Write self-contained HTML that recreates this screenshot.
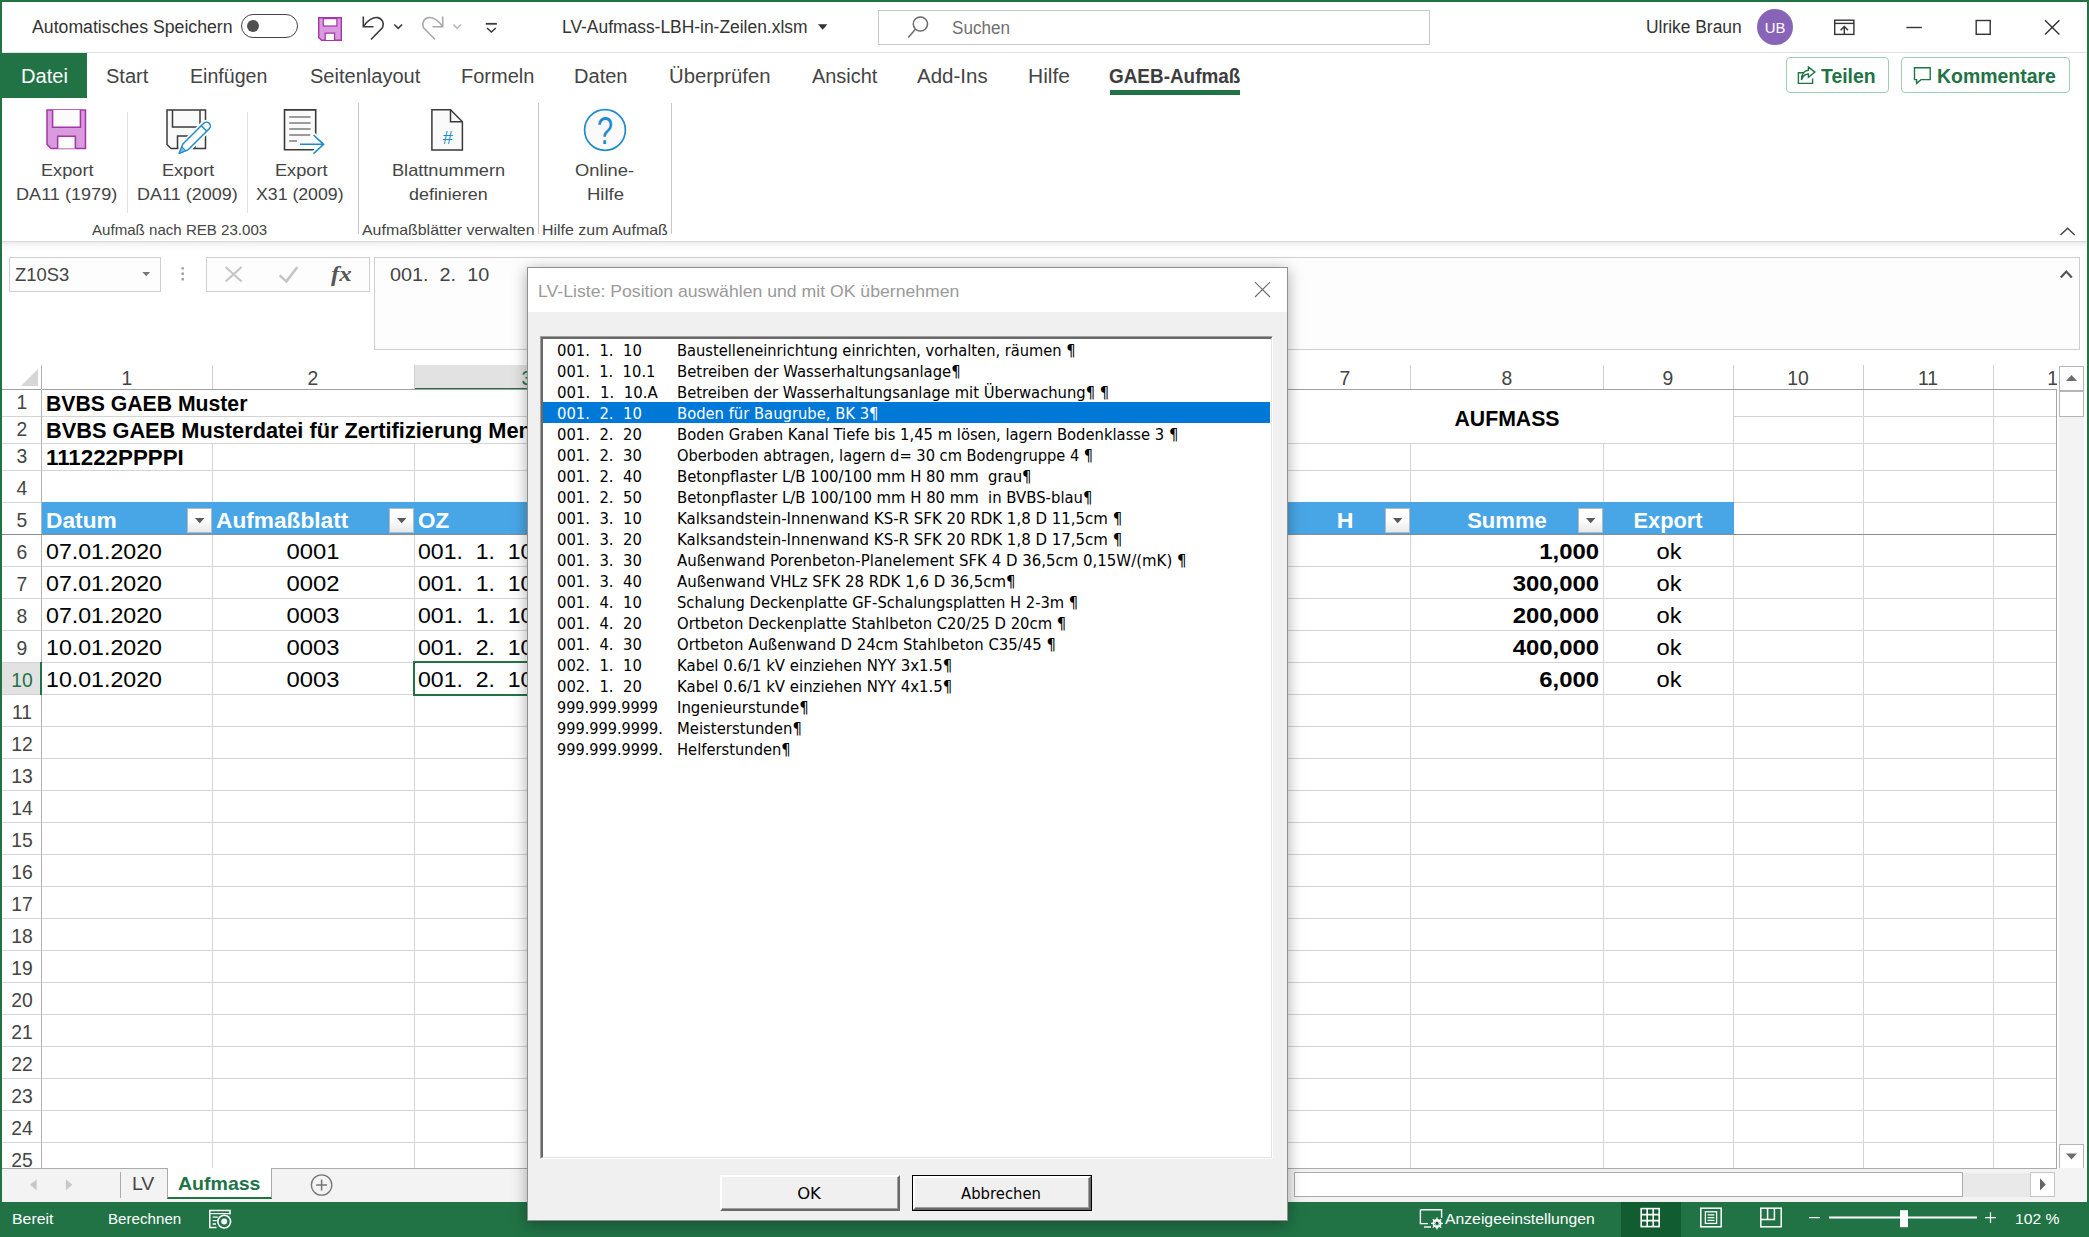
<!DOCTYPE html><html lang="de"><head><meta charset="utf-8"><title>LV-Aufmass-LBH-in-Zeilen.xlsm - Excel</title><style>
*{box-sizing:border-box;margin:0;padding:0}
html,body{width:2089px;height:1237px;overflow:hidden;background:#fff}
body{font-family:"Liberation Sans",sans-serif;position:relative;color:#444}
.t{position:absolute;white-space:pre;display:block}
.a{position:absolute}
svg{position:absolute;overflow:visible}
.vl{position:absolute;width:1px;background:#d4d4d4}
.hl{position:absolute;height:1px;background:#d4d4d4}
</style></head><body>
<div class="a" style="left:0;top:0;width:2089px;height:52px;background:#fff"></div>
<div class="hl" style="left:2px;top:52px;width:2085px;background:#e3e3e3"></div>
<div class="a" style="left:878px;top:10px;width:552px;height:35px;border:1px solid #c8c8c8;background:#fff"></div>
<span class="t" id="t1" style="top:8.76px;font-size:18px;line-height:36px;height:36px;color:#333;left:32.22px;transform-origin:0 50%;transform:scaleX(0.9826);"><span>Automatisches Speichern</span></span>
<div class="a" style="left:241px;top:14px;width:57px;height:24px;border:1.5px solid #444;border-radius:12px;background:#fff"></div>
<div class="a" style="left:247.3px;top:20.2px;width:12px;height:12px;border-radius:6px;background:#505050"></div>
<svg style="left:318px;top:17px" width="24" height="24" viewBox="0 0 24 24"><path d="M0.7 0.7H23.3V23.3H3.6L0.7 20.4Z" fill="#d99ade" stroke="#a436a8" stroke-width="1.4"/><rect x="5.3" y="1.6" width="13.6" height="7.4" fill="#fbfbfb" stroke="#a436a8" stroke-width="1.2"/><path d="M7.2 23V16.2H16.6V23" fill="#fbfbfb" stroke="#a436a8" stroke-width="1.2"/></svg>
<svg style="left:0;top:0" width="2089" height="100" fill="none" stroke-linecap="butt">
<g stroke="#3b3b3b" stroke-width="1.6">
<path d="M363.3 16.5V26.7H373.5"/><path d="M363.6 26.4C367 20.5 373 17 377.5 17.6C382 18.3 384.6 23 382.6 27.5L371 39.5"/>
<path d="M394.3 24.5L398.2 28.4L402.1 24.5"/>
<path d="M485.8 23.8H496.9" stroke-width="1.8"/><path d="M487 28L491.4 32L495.8 28"/>
</g>
<g stroke="#a8a8a8" stroke-width="1.6">
<path d="M442.7 16.5V26.7H432.5"/><path d="M442.4 26.4C439 20.5 433 17 428.5 17.6C424 18.3 421.4 23 423.4 27.5L435 39.5"/>
</g>
<path d="M453.3 24.5L457.2 28.4L461.1 24.5" stroke="#b8b8b8" stroke-width="1.6"/>
<path d="M818 24.2H827.4L822.7 29.8Z" fill="#333" stroke="none"/>
<g stroke="#6a6a6a" stroke-width="1.5"><circle cx="920.4" cy="24" r="7.1"/><path d="M915.4 29.3L908.3 37.6"/></g>
<g stroke="#333" stroke-width="1.4">
<rect x="1834.7" y="20.2" width="19.2" height="14.2"/><path d="M1834.7 23.4H1853.9"/><path d="M1844.3 34V26.6M1840.6 30.2L1844.3 26.4L1848 30.2"/>
<path d="M1906.4 27.5H1921.9"/>
<rect x="1976.2" y="20.5" width="14" height="13.8"/>
<path d="M2045 20.3L2059.4 34.6M2059.4 20.3L2045 34.6"/>
</g>
</svg>
<span class="t" id="t2" style="top:8.76px;font-size:18px;line-height:36px;height:36px;color:#333;left:561.92px;transform-origin:0 50%;transform:scaleX(0.9674);"><span>LV-Aufmass-LBH-in-Zeilen.xlsm</span></span>
<span class="t" id="t3" style="top:10.16px;font-size:18px;line-height:36px;height:36px;color:#707070;left:951.62px;transform-origin:0 50%;transform:scaleX(0.9492);"><span>Suchen</span></span>
<span class="t" id="t4" style="top:8.76px;font-size:18px;line-height:36px;height:36px;color:#333;left:1646.42px;transform-origin:0 50%;transform:scaleX(0.9658);"><span>Ulrike Braun</span></span>
<div class="a" style="left:1757px;top:9px;width:36px;height:36px;border-radius:18px;background:#8764b8"></div>
<span class="t" id="t5" style="top:13.65px;font-size:14px;line-height:28px;height:28px;color:#fff;left:1275.20px;width:1000px;text-align:center;transform-origin:50% 50%;transform:scaleX(1.0631);"><span>UB</span></span>
<div class="a" style="left:2px;top:53px;width:85px;height:45px;background:#217346"></div>
<span class="t" id="t6" style="top:56.54px;font-size:19.5px;line-height:39px;height:39px;color:#fff;left:20.53px;transform-origin:0 50%;transform:scaleX(1.0309);"><span>Datei</span></span>
<span class="t" id="t7" style="top:56.54px;font-size:19.5px;line-height:39px;height:39px;color:#444;left:106.33px;transform-origin:0 50%;transform:scaleX(1.0280);"><span>Start</span></span>
<span class="t" id="t8" style="top:56.54px;font-size:19.5px;line-height:39px;height:39px;color:#444;left:189.63px;transform-origin:0 50%;transform:scaleX(1.0046);"><span>Einfügen</span></span>
<span class="t" id="t9" style="top:56.54px;font-size:19.5px;line-height:39px;height:39px;color:#444;left:309.63px;transform-origin:0 50%;transform:scaleX(1.0281);"><span>Seitenlayout</span></span>
<span class="t" id="t10" style="top:56.54px;font-size:19.5px;line-height:39px;height:39px;color:#444;left:460.53px;transform-origin:0 50%;transform:scaleX(1.0253);"><span>Formeln</span></span>
<span class="t" id="t11" style="top:56.54px;font-size:19.5px;line-height:39px;height:39px;color:#444;left:574.33px;transform-origin:0 50%;transform:scaleX(1.0287);"><span>Daten</span></span>
<span class="t" id="t12" style="top:56.54px;font-size:19.5px;line-height:39px;height:39px;color:#444;left:668.53px;transform-origin:0 50%;transform:scaleX(1.0397);"><span>Überprüfen</span></span>
<span class="t" id="t13" style="top:56.54px;font-size:19.5px;line-height:39px;height:39px;color:#444;left:811.53px;transform-origin:0 50%;transform:scaleX(1.0217);"><span>Ansicht</span></span>
<span class="t" id="t14" style="top:56.54px;font-size:19.5px;line-height:39px;height:39px;color:#444;left:917.33px;transform-origin:0 50%;transform:scaleX(1.0511);"><span>Add-Ins</span></span>
<span class="t" id="t15" style="top:56.54px;font-size:19.5px;line-height:39px;height:39px;color:#444;left:1028.13px;transform-origin:0 50%;transform:scaleX(1.0775);"><span>Hilfe</span></span>
<span class="t" id="t16" style="top:56.54px;font-size:19.5px;line-height:39px;height:39px;color:#3d3d3d;font-weight:700;left:1108.83px;transform-origin:0 50%;transform:scaleX(0.9699);"><span>GAEB-Aufmaß</span></span>
<div class="a" style="left:1110px;top:90px;width:130px;height:5px;background:#217346"></div>
<div class="a" style="left:1786px;top:57px;width:103px;height:36px;border:1px solid #9bceb0;border-radius:4px;background:#fff"></div>
<div class="a" style="left:1901px;top:57px;width:168.5px;height:36px;border:1px solid #9bceb0;border-radius:4px;background:#fff"></div>
<svg style="left:0;top:0" width="2089" height="100" fill="none" stroke="#217346" stroke-width="1.4" stroke-linejoin="miter">
<path d="M1804 72.8H1798.4V83.4H1812.6V78.6"/>
<path d="M1808.4 70.2V66.9L1814.9 72.1L1808.4 77.3V74C1805 74 1802.8 76 1801.5 80C1801.5 74 1804 70.6 1808.4 70.2Z"/>
<path d="M1914.5 67.7H1930.2V79.6H1921L1916.6 83.4V79.6H1914.5Z"/>
</svg>
<span class="t" id="t17" style="top:56.74px;font-size:19.5px;line-height:39px;height:39px;color:#217346;font-weight:700;left:1820.83px;transform-origin:0 50%;transform:scaleX(0.9952);"><span>Teilen</span></span>
<span class="t" id="t18" style="top:56.74px;font-size:19.5px;line-height:39px;height:39px;color:#217346;font-weight:700;left:1936.53px;transform-origin:0 50%;transform:scaleX(0.9978);"><span>Kommentare</span></span>
<div class="a" style="left:2px;top:98px;width:2085px;height:143px;background:#fff"></div>
<svg style="left:46px;top:109px" width="40.5" height="40.5" viewBox="0 0 40 40"><path d="M1 1H39V39H5L1 35Z" fill="#d99ade" stroke="#a436a8" stroke-width="1.5"/><path d="M6.5 1V18H34V1" fill="#fbfbfb" stroke="#a436a8" stroke-width="1.5"/><path d="M11.5 39V27H29V39" fill="#fbfbfb" stroke="#a436a8" stroke-width="1.5"/></svg>
<svg style="left:166px;top:109px" width="46" height="46" viewBox="0 0 46 46" fill="none">
<path d="M1 1H39.5V39.5H5L1 35.5Z" fill="#fafafa" stroke="#3a3a3a" stroke-width="1.5"/>
<path d="M6.5 1V18H34V1" stroke="#3a3a3a" stroke-width="1.5"/><path d="M11.5 39.5V27H29V39.5" stroke="#3a3a3a" stroke-width="1.5"/>
<g transform="translate(13.3 44.2) rotate(-45)">
<path d="M0 0L9 -3.9H38.4A3.9 3.9 0 0 1 38.4 3.9H9Z" fill="#fff" stroke="#fff" stroke-width="5"/>
<path d="M0 0L9 -3.9H38.4A3.9 3.9 0 0 1 38.4 3.9H9Z" fill="#fff" stroke="#1e8bcd" stroke-width="1.5" stroke-linejoin="round"/>
<path d="M0 0L6.4 -2.9V2.9Z" fill="#7fbde6" stroke="#1e8bcd" stroke-width="1"/>
<path d="M35 -3.9V3.9" stroke="#1e8bcd" stroke-width="1.5"/>
</g></svg>
<svg style="left:283px;top:109px" width="42" height="46" viewBox="0 0 42 46" fill="none">
<path d="M1.5 0.9H32.7V40.7H1.5Z" fill="#fafafa" stroke="#3a3a3a" stroke-width="1.6"/>
<path d="M6.2 8H27.6M6.2 14H27.6M6.2 20.1H27.6M6.2 26H27.6M6.2 32.1H14" stroke="#7c7c7c" stroke-width="1.5"/>
<path d="M30.5 26L40.6 35.3L30.5 44.6" stroke="#fff" stroke-width="5" stroke-linecap="square"/>
<path d="M31.5 24.5L43 35.3L31.5 46Z" fill="#fff"/><path d="M28 35.3H33" stroke="#fafafa" stroke-width="4"/>
<path d="M17 35.3H40.2M30.5 26L40.6 35.3L30.5 44.6" stroke="#1e8bcd" stroke-width="1.6"/>
</svg>
<svg style="left:431px;top:109px" width="33" height="42" viewBox="0 0 33 42" fill="none">
<path d="M0.9 0.8H19.5L31.4 12.8V41H0.9Z" fill="#fafafa" stroke="#3a3a3a" stroke-width="1.5"/>
<path d="M19.5 0.8V12.8H31.4" stroke="#3a3a3a" stroke-width="1.5"/>
<text x="16.8" y="35.2" font-family="Liberation Sans, sans-serif" font-size="18" fill="#1e8bcd" text-anchor="middle" stroke="none">#</text>
</svg>
<svg style="left:583px;top:108px" width="44" height="44" viewBox="0 0 44 44" fill="none">
<circle cx="22" cy="22" r="20.4" fill="#fafafa" stroke="#1e8bcd" stroke-width="1.7"/>
<text x="22" y="36" font-family="Liberation Sans, sans-serif" font-size="39" fill="#1e8bcd" text-anchor="middle" stroke="none" transform="translate(22 0) scale(0.74 1) translate(-22 0)">?</text>
</svg>
<span class="t" id="t19" style="top:153.61px;font-size:17px;line-height:34px;height:34px;color:#444;left:41.48px;transform-origin:0 50%;transform:scaleX(1.0692);"><span>Export</span></span>
<span class="t" id="t20" style="top:177.81px;font-size:17px;line-height:34px;height:34px;color:#444;left:16.48px;transform-origin:0 50%;transform:scaleX(1.0641);"><span>DA11 (1979)</span></span>
<span class="t" id="t21" style="top:153.61px;font-size:17px;line-height:34px;height:34px;color:#444;left:161.78px;transform-origin:0 50%;transform:scaleX(1.0631);"><span>Export</span></span>
<span class="t" id="t22" style="top:177.81px;font-size:17px;line-height:34px;height:34px;color:#444;left:136.98px;transform-origin:0 50%;transform:scaleX(1.0589);"><span>DA11 (2009)</span></span>
<span class="t" id="t23" style="top:153.61px;font-size:17px;line-height:34px;height:34px;color:#444;left:274.78px;transform-origin:0 50%;transform:scaleX(1.0692);"><span>Export</span></span>
<span class="t" id="t24" style="top:177.81px;font-size:17px;line-height:34px;height:34px;color:#444;left:256.48px;transform-origin:0 50%;transform:scaleX(1.0406);"><span>X31 (2009)</span></span>
<span class="t" id="t25" style="top:153.61px;font-size:17px;line-height:34px;height:34px;color:#444;left:391.68px;transform-origin:0 50%;transform:scaleX(1.0691);"><span>Blattnummern</span></span>
<span class="t" id="t26" style="top:177.81px;font-size:17px;line-height:34px;height:34px;color:#444;left:408.68px;transform-origin:0 50%;transform:scaleX(1.0531);"><span>definieren</span></span>
<span class="t" id="t27" style="top:153.61px;font-size:17px;line-height:34px;height:34px;color:#444;left:574.98px;transform-origin:0 50%;transform:scaleX(1.0771);"><span>Online-</span></span>
<span class="t" id="t28" style="top:177.81px;font-size:17px;line-height:34px;height:34px;color:#444;left:586.98px;transform-origin:0 50%;transform:scaleX(1.0889);"><span>Hilfe</span></span>
<span class="t" id="t29" style="top:214.60px;font-size:15px;line-height:30px;height:30px;color:#444;left:91.70px;transform-origin:0 50%;transform:scaleX(1.0054);"><span>Aufmaß nach REB 23.003</span></span>
<span class="t" id="t30" style="top:214.60px;font-size:15px;line-height:30px;height:30px;color:#444;left:361.70px;transform-origin:0 50%;transform:scaleX(1.0616);"><span>Aufmaßblätter verwalten</span></span>
<span class="t" id="t31" style="top:214.60px;font-size:15px;line-height:30px;height:30px;color:#444;left:541.70px;transform-origin:0 50%;transform:scaleX(1.0627);"><span>Hilfe zum Aufmaß</span></span>
<div class="vl" style="left:127px;top:112px;height:101px;background:#e1e1e1"></div>
<div class="vl" style="left:247px;top:112px;height:101px;background:#e1e1e1"></div>
<div class="vl" style="left:358px;top:103px;height:131px;background:#c8c8c8"></div>
<div class="vl" style="left:538px;top:103px;height:131px;background:#c8c8c8"></div>
<div class="vl" style="left:671px;top:103px;height:131px;background:#c8c8c8"></div>
<svg style="left:0;top:0" width="2089" height="240" fill="none"><path d="M2060.5 235L2067.6 228.3L2074.7 235" stroke="#444" stroke-width="1.5"/></svg>
<div class="a" style="left:2px;top:241px;width:2085px;height:10px;background:linear-gradient(#d9d9d9 0,#d9d9d9 1px,#ececec 1px,#fafafa 6px,#fff 10px)"></div>
<div class="a" style="left:9px;top:257px;width:152px;height:35px;border:1px solid #cfcfcf;background:#fdfdfd"></div>
<div class="a" style="left:206px;top:257px;width:164px;height:35px;border:1px solid #cfcfcf;background:#fdfdfd"></div>
<div class="a" style="left:374px;top:257px;width:1706px;height:93px;border:1px solid #cfcfcf;background:#fdfdfd"></div>
<span class="t" id="t32" style="top:256.02px;font-size:19px;line-height:38px;height:38px;color:#444;left:14.86px;transform-origin:0 50%;transform:scaleX(0.9696);"><span>Z10S3</span></span>
<span class="t" id="t33" style="top:256.22px;font-size:19px;line-height:38px;height:38px;color:#444;left:390.26px;transform-origin:0 50%;transform:scaleX(1.0431);"><span>001.  2.  10</span></span>
<svg style="left:0;top:240px" width="2089" height="120" fill="none">
<path d="M142.3 32H150.1L146.2 36.2Z" fill="#777"/>
<path d="M181.5 27.2h2.4v2.4h-2.4zM181.5 32.6h2.4v2.4h-2.4zM181.5 38h2.4v2.4h-2.4z" fill="#9d9d9d"/>
<path d="M225.6 27L241.6 41.6M241.6 27L225.6 41.6" stroke="#c4c4c4" stroke-width="2"/>
<path d="M279.6 35.4L286.4 41.4L297.4 27" stroke="#c4c4c4" stroke-width="2.6"/>
<path d="M2060.8 37.6L2066.3 31.6L2071.8 37.6" stroke="#555" stroke-width="2.2"/>
</svg>
<span class="t" id="t34" style="top:251.88px;font-size:22px;line-height:44px;height:44px;color:#555;font-weight:700;font-family:'Liberation Serif', serif;left:330.68px;transform-origin:0 50%;transform:scaleX(1.1261);font-style:italic;"><span>fx</span></span>
<div class="a" style="left:2px;top:351px;width:2055px;height:817px;background:#fff;overflow:hidden">
<div class="a" style="left:412px;top:14px;width:220px;height:24px;background:#e2e2e2"></div>
<div class="a" style="left:412px;top:37px;width:220px;height:2px;background:#217346"></div>
<div class="a" style="left:0px;top:312px;width:39px;height:31px;background:#e2e2e2"></div>
<div class="hl" style="left:0px;top:65px;width:1278px;background:#d4d4d4"></div>
<div class="hl" style="left:1731px;top:65px;width:323px;background:#d4d4d4"></div>
<div class="hl" style="left:0px;top:92px;width:2054px;background:#d4d4d4"></div>
<div class="hl" style="left:0px;top:119px;width:2054px;background:#d4d4d4"></div>
<div class="hl" style="left:0px;top:151px;width:2054px;background:#d4d4d4"></div>
<div class="hl" style="left:0px;top:183px;width:2054px;background:#d4d4d4"></div>
<div class="hl" style="left:0px;top:215px;width:2054px;background:#d4d4d4"></div>
<div class="hl" style="left:0px;top:247px;width:2054px;background:#d4d4d4"></div>
<div class="hl" style="left:0px;top:279px;width:2054px;background:#d4d4d4"></div>
<div class="hl" style="left:0px;top:311px;width:2054px;background:#d4d4d4"></div>
<div class="hl" style="left:0px;top:343px;width:2054px;background:#d4d4d4"></div>
<div class="hl" style="left:0px;top:375px;width:2054px;background:#d4d4d4"></div>
<div class="hl" style="left:0px;top:407px;width:2054px;background:#d4d4d4"></div>
<div class="hl" style="left:0px;top:439px;width:2054px;background:#d4d4d4"></div>
<div class="hl" style="left:0px;top:471px;width:2054px;background:#d4d4d4"></div>
<div class="hl" style="left:0px;top:503px;width:2054px;background:#d4d4d4"></div>
<div class="hl" style="left:0px;top:535px;width:2054px;background:#d4d4d4"></div>
<div class="hl" style="left:0px;top:567px;width:2054px;background:#d4d4d4"></div>
<div class="hl" style="left:0px;top:599px;width:2054px;background:#d4d4d4"></div>
<div class="hl" style="left:0px;top:631px;width:2054px;background:#d4d4d4"></div>
<div class="hl" style="left:0px;top:663px;width:2054px;background:#d4d4d4"></div>
<div class="hl" style="left:0px;top:695px;width:2054px;background:#d4d4d4"></div>
<div class="hl" style="left:0px;top:727px;width:2054px;background:#d4d4d4"></div>
<div class="hl" style="left:0px;top:759px;width:2054px;background:#d4d4d4"></div>
<div class="hl" style="left:0px;top:791px;width:2054px;background:#d4d4d4"></div>
<div class="vl" style="left:210px;top:92px;height:725px;background:#d4d4d4"></div>
<div class="vl" style="left:412px;top:92px;height:725px;background:#d4d4d4"></div>
<div class="vl" style="left:632px;top:92px;height:725px;background:#d4d4d4"></div>
<div class="vl" style="left:848px;top:92px;height:725px;background:#d4d4d4"></div>
<div class="vl" style="left:1063px;top:92px;height:725px;background:#d4d4d4"></div>
<div class="vl" style="left:1278px;top:92px;height:725px;background:#d4d4d4"></div>
<div class="vl" style="left:1408px;top:92px;height:725px;background:#d4d4d4"></div>
<div class="vl" style="left:1601px;top:92px;height:725px;background:#d4d4d4"></div>
<div class="vl" style="left:1731px;top:38px;height:779px;background:#d4d4d4"></div>
<div class="vl" style="left:1861px;top:38px;height:779px;background:#d4d4d4"></div>
<div class="vl" style="left:1991px;top:38px;height:779px;background:#d4d4d4"></div>
<div class="vl" style="left:210px;top:14px;height:24px;background:#d0d0d0"></div>
<div class="vl" style="left:412px;top:14px;height:24px;background:#d0d0d0"></div>
<div class="vl" style="left:632px;top:14px;height:24px;background:#d0d0d0"></div>
<div class="vl" style="left:848px;top:14px;height:24px;background:#d0d0d0"></div>
<div class="vl" style="left:1063px;top:14px;height:24px;background:#d0d0d0"></div>
<div class="vl" style="left:1278px;top:14px;height:24px;background:#d0d0d0"></div>
<div class="vl" style="left:1408px;top:14px;height:24px;background:#d0d0d0"></div>
<div class="vl" style="left:1601px;top:14px;height:24px;background:#d0d0d0"></div>
<div class="vl" style="left:1731px;top:14px;height:24px;background:#d0d0d0"></div>
<div class="vl" style="left:1861px;top:14px;height:24px;background:#d0d0d0"></div>
<div class="vl" style="left:1991px;top:14px;height:24px;background:#d0d0d0"></div>
<div class="hl" style="left:0px;top:38px;width:2055px;background:#a0a0a0"></div>
<div class="vl" style="left:39px;top:14px;height:803px;background:#b4b4b4"></div>
<div class="vl" style="left:2054px;top:38px;height:779px;background:#a6a6a6"></div>
<svg style="left:18px;top:17px" width="19" height="19"><path d="M18 1V18H1Z" fill="#d6d6d6"/></svg>
<div class="a" style="left:40px;top:151px;width:1692px;height:32px;background:#49a6e6"></div>
<div class="hl" style="left:0px;top:183px;width:2054px;background:#8c8c8c"></div>
<div class="a" style="left:38px;top:311px;width:2px;height:33px;background:#217346"></div>
<div class="a" style="left:185px;top:157px;width:25px;height:25px;border:1px solid #b9b9b9;background:linear-gradient(#fff,#fff 45%,#e9e9e9)"><svg style="left:7px;top:9px" width="10" height="6"><path d="M0 0H9.4L4.7 5.2Z" fill="#595959"/></svg></div>
<div class="a" style="left:387px;top:157px;width:25px;height:25px;border:1px solid #b9b9b9;background:linear-gradient(#fff,#fff 45%,#e9e9e9)"><svg style="left:7px;top:9px" width="10" height="6"><path d="M0 0H9.4L4.7 5.2Z" fill="#595959"/></svg></div>
<div class="a" style="left:1383px;top:157px;width:25px;height:25px;border:1px solid #b9b9b9;background:linear-gradient(#fff,#fff 45%,#e9e9e9)"><svg style="left:7px;top:9px" width="10" height="6"><path d="M0 0H9.4L4.7 5.2Z" fill="#595959"/></svg></div>
<div class="a" style="left:1576px;top:157px;width:25px;height:25px;border:1px solid #b9b9b9;background:linear-gradient(#fff,#fff 45%,#e9e9e9)"><svg style="left:7px;top:9px" width="10" height="6"><path d="M0 0H9.4L4.7 5.2Z" fill="#595959"/></svg></div>
<div class="a" style="left:411px;top:310px;width:223px;height:35px;border:2px solid #217346"></div>
<span class="t" id="t35" style="top:357.02px;font-size:21px;line-height:42px;height:42px;color:#444;left:-372.70px;width:1000px;text-align:center;transform-origin:50% 50%;transform:scaleX(0.9200);margin-left:-2px;margin-top:-351px;"><span>1</span></span>
<span class="t" id="t36" style="top:357.02px;font-size:21px;line-height:42px;height:42px;color:#444;left:-186.80px;width:1000px;text-align:center;transform-origin:50% 50%;transform:scaleX(0.9200);margin-left:-2px;margin-top:-351px;"><span>2</span></span>
<span class="t" id="t37" style="top:357.02px;font-size:21px;line-height:42px;height:42px;color:#217346;left:27.20px;width:1000px;text-align:center;transform-origin:50% 50%;transform:scaleX(0.9200);margin-left:-2px;margin-top:-351px;"><span>3</span></span>
<span class="t" id="t38" style="top:357.02px;font-size:21px;line-height:42px;height:42px;color:#444;left:242.00px;width:1000px;text-align:center;transform-origin:50% 50%;transform:scaleX(0.9200);margin-left:-2px;margin-top:-351px;"><span>4</span></span>
<span class="t" id="t39" style="top:357.02px;font-size:21px;line-height:42px;height:42px;color:#444;left:457.00px;width:1000px;text-align:center;transform-origin:50% 50%;transform:scaleX(0.9200);margin-left:-2px;margin-top:-351px;"><span>5</span></span>
<span class="t" id="t40" style="top:357.02px;font-size:21px;line-height:42px;height:42px;color:#444;left:672.00px;width:1000px;text-align:center;transform-origin:50% 50%;transform:scaleX(0.9200);margin-left:-2px;margin-top:-351px;"><span>6</span></span>
<span class="t" id="t41" style="top:357.02px;font-size:21px;line-height:42px;height:42px;color:#444;left:845.00px;width:1000px;text-align:center;transform-origin:50% 50%;transform:scaleX(0.9200);margin-left:-2px;margin-top:-351px;"><span>7</span></span>
<span class="t" id="t42" style="top:357.02px;font-size:21px;line-height:42px;height:42px;color:#444;left:1007.00px;width:1000px;text-align:center;transform-origin:50% 50%;transform:scaleX(0.9200);margin-left:-2px;margin-top:-351px;"><span>8</span></span>
<span class="t" id="t43" style="top:357.02px;font-size:21px;line-height:42px;height:42px;color:#444;left:1168.40px;width:1000px;text-align:center;transform-origin:50% 50%;transform:scaleX(0.9200);margin-left:-2px;margin-top:-351px;"><span>9</span></span>
<span class="t" id="t44" style="top:357.02px;font-size:21px;line-height:42px;height:42px;color:#444;left:1298.40px;width:1000px;text-align:center;transform-origin:50% 50%;transform:scaleX(0.9200);margin-left:-2px;margin-top:-351px;"><span>10</span></span>
<span class="t" id="t45" style="top:357.02px;font-size:21px;line-height:42px;height:42px;color:#444;left:1428.40px;width:1000px;text-align:center;transform-origin:50% 50%;transform:scaleX(0.9200);margin-left:-2px;margin-top:-351px;"><span>11</span></span>
<span class="t" id="t46" style="top:357.02px;font-size:21px;line-height:42px;height:42px;color:#444;left:1558.40px;width:1000px;text-align:center;transform-origin:50% 50%;transform:scaleX(0.9200);margin-left:-2px;margin-top:-351px;"><span>12</span></span>
<span class="t" id="t47" style="top:381.22px;font-size:21px;line-height:42px;height:42px;color:#444;left:-477.60px;width:1000px;text-align:center;transform-origin:50% 50%;transform:scaleX(0.9200);margin-left:-2px;margin-top:-351px;"><span>1</span></span>
<span class="t" id="t48" style="top:408.22px;font-size:21px;line-height:42px;height:42px;color:#444;left:-477.60px;width:1000px;text-align:center;transform-origin:50% 50%;transform:scaleX(0.9200);margin-left:-2px;margin-top:-351px;"><span>2</span></span>
<span class="t" id="t49" style="top:435.22px;font-size:21px;line-height:42px;height:42px;color:#444;left:-477.60px;width:1000px;text-align:center;transform-origin:50% 50%;transform:scaleX(0.9200);margin-left:-2px;margin-top:-351px;"><span>3</span></span>
<span class="t" id="t50" style="top:467.22px;font-size:21px;line-height:42px;height:42px;color:#444;left:-477.60px;width:1000px;text-align:center;transform-origin:50% 50%;transform:scaleX(0.9200);margin-left:-2px;margin-top:-351px;"><span>4</span></span>
<span class="t" id="t51" style="top:499.22px;font-size:21px;line-height:42px;height:42px;color:#444;left:-477.60px;width:1000px;text-align:center;transform-origin:50% 50%;transform:scaleX(0.9200);margin-left:-2px;margin-top:-351px;"><span>5</span></span>
<span class="t" id="t52" style="top:531.22px;font-size:21px;line-height:42px;height:42px;color:#444;left:-477.60px;width:1000px;text-align:center;transform-origin:50% 50%;transform:scaleX(0.9200);margin-left:-2px;margin-top:-351px;"><span>6</span></span>
<span class="t" id="t53" style="top:563.22px;font-size:21px;line-height:42px;height:42px;color:#444;left:-477.60px;width:1000px;text-align:center;transform-origin:50% 50%;transform:scaleX(0.9200);margin-left:-2px;margin-top:-351px;"><span>7</span></span>
<span class="t" id="t54" style="top:595.22px;font-size:21px;line-height:42px;height:42px;color:#444;left:-477.60px;width:1000px;text-align:center;transform-origin:50% 50%;transform:scaleX(0.9200);margin-left:-2px;margin-top:-351px;"><span>8</span></span>
<span class="t" id="t55" style="top:627.22px;font-size:21px;line-height:42px;height:42px;color:#444;left:-477.60px;width:1000px;text-align:center;transform-origin:50% 50%;transform:scaleX(0.9200);margin-left:-2px;margin-top:-351px;"><span>9</span></span>
<span class="t" id="t56" style="top:659.22px;font-size:21px;line-height:42px;height:42px;color:#217346;left:-477.60px;width:1000px;text-align:center;transform-origin:50% 50%;transform:scaleX(0.9200);margin-left:-2px;margin-top:-351px;"><span>10</span></span>
<span class="t" id="t57" style="top:691.22px;font-size:21px;line-height:42px;height:42px;color:#444;left:-477.60px;width:1000px;text-align:center;transform-origin:50% 50%;transform:scaleX(0.9200);margin-left:-2px;margin-top:-351px;"><span>11</span></span>
<span class="t" id="t58" style="top:723.22px;font-size:21px;line-height:42px;height:42px;color:#444;left:-477.60px;width:1000px;text-align:center;transform-origin:50% 50%;transform:scaleX(0.9200);margin-left:-2px;margin-top:-351px;"><span>12</span></span>
<span class="t" id="t59" style="top:755.22px;font-size:21px;line-height:42px;height:42px;color:#444;left:-477.60px;width:1000px;text-align:center;transform-origin:50% 50%;transform:scaleX(0.9200);margin-left:-2px;margin-top:-351px;"><span>13</span></span>
<span class="t" id="t60" style="top:787.22px;font-size:21px;line-height:42px;height:42px;color:#444;left:-477.60px;width:1000px;text-align:center;transform-origin:50% 50%;transform:scaleX(0.9200);margin-left:-2px;margin-top:-351px;"><span>14</span></span>
<span class="t" id="t61" style="top:819.22px;font-size:21px;line-height:42px;height:42px;color:#444;left:-477.60px;width:1000px;text-align:center;transform-origin:50% 50%;transform:scaleX(0.9200);margin-left:-2px;margin-top:-351px;"><span>15</span></span>
<span class="t" id="t62" style="top:851.22px;font-size:21px;line-height:42px;height:42px;color:#444;left:-477.60px;width:1000px;text-align:center;transform-origin:50% 50%;transform:scaleX(0.9200);margin-left:-2px;margin-top:-351px;"><span>16</span></span>
<span class="t" id="t63" style="top:883.22px;font-size:21px;line-height:42px;height:42px;color:#444;left:-477.60px;width:1000px;text-align:center;transform-origin:50% 50%;transform:scaleX(0.9200);margin-left:-2px;margin-top:-351px;"><span>17</span></span>
<span class="t" id="t64" style="top:915.22px;font-size:21px;line-height:42px;height:42px;color:#444;left:-477.60px;width:1000px;text-align:center;transform-origin:50% 50%;transform:scaleX(0.9200);margin-left:-2px;margin-top:-351px;"><span>18</span></span>
<span class="t" id="t65" style="top:947.22px;font-size:21px;line-height:42px;height:42px;color:#444;left:-477.60px;width:1000px;text-align:center;transform-origin:50% 50%;transform:scaleX(0.9200);margin-left:-2px;margin-top:-351px;"><span>19</span></span>
<span class="t" id="t66" style="top:979.22px;font-size:21px;line-height:42px;height:42px;color:#444;left:-477.60px;width:1000px;text-align:center;transform-origin:50% 50%;transform:scaleX(0.9200);margin-left:-2px;margin-top:-351px;"><span>20</span></span>
<span class="t" id="t67" style="top:1011.22px;font-size:21px;line-height:42px;height:42px;color:#444;left:-477.60px;width:1000px;text-align:center;transform-origin:50% 50%;transform:scaleX(0.9200);margin-left:-2px;margin-top:-351px;"><span>21</span></span>
<span class="t" id="t68" style="top:1043.22px;font-size:21px;line-height:42px;height:42px;color:#444;left:-477.60px;width:1000px;text-align:center;transform-origin:50% 50%;transform:scaleX(0.9200);margin-left:-2px;margin-top:-351px;"><span>22</span></span>
<span class="t" id="t69" style="top:1075.22px;font-size:21px;line-height:42px;height:42px;color:#444;left:-477.60px;width:1000px;text-align:center;transform-origin:50% 50%;transform:scaleX(0.9200);margin-left:-2px;margin-top:-351px;"><span>23</span></span>
<span class="t" id="t70" style="top:1107.22px;font-size:21px;line-height:42px;height:42px;color:#444;left:-477.60px;width:1000px;text-align:center;transform-origin:50% 50%;transform:scaleX(0.9200);margin-left:-2px;margin-top:-351px;"><span>24</span></span>
<span class="t" id="t71" style="top:1139.22px;font-size:21px;line-height:42px;height:42px;color:#444;left:-477.60px;width:1000px;text-align:center;transform-origin:50% 50%;transform:scaleX(0.9200);margin-left:-2px;margin-top:-351px;"><span>25</span></span>
<span class="t" id="c_r1" style="top:380.00px;font-size:22.5px;line-height:45px;height:45px;color:#000;font-weight:700;left:45.55px;transform-origin:0 50%;transform:scaleX(0.9420);margin-left:-2px;margin-top:-349.8px;"><span>BVBS GAEB Muster</span></span>
<span class="t" id="t74" style="top:407.10px;font-size:22.5px;line-height:45px;height:45px;color:#000;font-weight:700;left:45.55px;transform-origin:0 50%;transform:scaleX(0.9666);margin-left:-2px;margin-top:-349.8px;"><span>BVBS GAEB Musterdatei für Zertifizierung Mengenermittlung</span></span>
<span class="t" id="t75" style="top:433.70px;font-size:22.5px;line-height:45px;height:45px;color:#000;font-weight:700;left:45.55px;transform-origin:0 50%;transform:scaleX(0.9921);margin-left:-2px;margin-top:-349.8px;"><span>111222PPPPI</span></span>
<span class="t" id="t76" style="top:394.70px;font-size:22.5px;line-height:45px;height:45px;color:#000;font-weight:700;left:1007.20px;width:1000px;text-align:center;transform-origin:50% 50%;transform:scaleX(0.9447);margin-left:-2px;margin-top:-349.8px;"><span>AUFMASS</span></span>
<span class="t" id="t77" style="top:496.40px;font-size:22.5px;line-height:45px;height:45px;color:#fff;font-weight:700;left:45.55px;transform-origin:0 50%;transform:scaleX(1.0112);margin-left:-2px;margin-top:-349.8px;"><span>Datum</span></span>
<span class="t" id="t78" style="top:496.40px;font-size:22.5px;line-height:45px;height:45px;color:#fff;font-weight:700;left:215.85px;transform-origin:0 50%;transform:scaleX(1.0080);margin-left:-2px;margin-top:-349.8px;"><span>Aufmaßblatt</span></span>
<span class="t" id="t79" style="top:496.40px;font-size:22.5px;line-height:45px;height:45px;color:#fff;font-weight:700;left:417.55px;transform-origin:0 50%;transform:scaleX(0.9984);margin-left:-2px;margin-top:-349.8px;"><span>OZ</span></span>
<span class="t" id="t80" style="top:496.40px;font-size:22.5px;line-height:45px;height:45px;color:#fff;font-weight:700;left:845.40px;width:1000px;text-align:center;transform-origin:50% 50%;transform:scaleX(1.0277);margin-left:-2px;margin-top:-349.8px;"><span>H</span></span>
<span class="t" id="t81" style="top:496.40px;font-size:22.5px;line-height:45px;height:45px;color:#fff;font-weight:700;left:1006.50px;width:1000px;text-align:center;transform-origin:50% 50%;transform:scaleX(0.9805);margin-left:-2px;margin-top:-349.8px;"><span>Summe</span></span>
<span class="t" id="t82" style="top:496.40px;font-size:22.5px;line-height:45px;height:45px;color:#fff;font-weight:700;left:1167.85px;width:1000px;text-align:center;transform-origin:50% 50%;transform:scaleX(0.9682);margin-left:-2px;margin-top:-349.8px;"><span>Export</span></span>
<span class="t" id="c_date" style="top:527.40px;font-size:22.5px;line-height:45px;height:45px;color:#000;left:46.25px;transform-origin:0 50%;transform:scaleX(1.0291);margin-left:-2px;margin-top:-349.8px;"><span>07.01.2020</span></span>
<span class="t" id="c_bl" style="top:527.40px;font-size:22.5px;line-height:45px;height:45px;color:#000;left:-186.65px;width:1000px;text-align:center;transform-origin:50% 50%;transform:scaleX(1.0587);margin-left:-2px;margin-top:-349.8px;"><span>0001</span></span>
<span class="t" id="c_oz" style="top:527.40px;font-size:22.5px;line-height:45px;height:45px;color:#000;left:417.55px;transform-origin:0 50%;transform:scaleX(1.0240);margin-left:-2px;margin-top:-349.8px;"><span>001.  1.  10</span></span>
<span class="t" id="t86" style="top:527.40px;font-size:22.5px;line-height:45px;height:45px;color:#000;font-weight:700;left:599.15px;width:1000px;text-align:right;transform-origin:100% 50%;transform:scaleX(1.0609);margin-left:-2px;margin-top:-349.8px;"><span>1,000</span></span>
<span class="t" id="c_ok" style="top:527.40px;font-size:22.5px;line-height:45px;height:45px;color:#000;left:1169.00px;width:1000px;text-align:center;transform-origin:50% 50%;transform:scaleX(1.0561);margin-left:-2px;margin-top:-349.8px;"><span>ok</span></span>
<span class="t" id="t88" style="top:559.40px;font-size:22.5px;line-height:45px;height:45px;color:#000;left:46.25px;transform-origin:0 50%;transform:scaleX(1.0291);margin-left:-2px;margin-top:-349.8px;"><span>07.01.2020</span></span>
<span class="t" id="t89" style="top:559.40px;font-size:22.5px;line-height:45px;height:45px;color:#000;left:-186.70px;width:1000px;text-align:center;transform-origin:50% 50%;transform:scaleX(1.0587);margin-left:-2px;margin-top:-349.8px;"><span>0002</span></span>
<span class="t" id="t90" style="top:559.40px;font-size:22.5px;line-height:45px;height:45px;color:#000;left:417.55px;transform-origin:0 50%;transform:scaleX(1.0240);margin-left:-2px;margin-top:-349.8px;"><span>001.  1.  10.1</span></span>
<span class="t" id="c_sum" style="top:559.40px;font-size:22.5px;line-height:45px;height:45px;color:#000;font-weight:700;left:599.15px;width:1000px;text-align:right;transform-origin:100% 50%;transform:scaleX(1.0609);margin-left:-2px;margin-top:-349.8px;"><span>300,000</span></span>
<span class="t" id="t92" style="top:559.40px;font-size:22.5px;line-height:45px;height:45px;color:#000;left:1168.90px;width:1000px;text-align:center;transform-origin:50% 50%;transform:scaleX(1.0561);margin-left:-2px;margin-top:-349.8px;"><span>ok</span></span>
<span class="t" id="t93" style="top:591.40px;font-size:22.5px;line-height:45px;height:45px;color:#000;left:46.25px;transform-origin:0 50%;transform:scaleX(1.0291);margin-left:-2px;margin-top:-349.8px;"><span>07.01.2020</span></span>
<span class="t" id="t94" style="top:591.40px;font-size:22.5px;line-height:45px;height:45px;color:#000;left:-186.70px;width:1000px;text-align:center;transform-origin:50% 50%;transform:scaleX(1.0587);margin-left:-2px;margin-top:-349.8px;"><span>0003</span></span>
<span class="t" id="t95" style="top:591.40px;font-size:22.5px;line-height:45px;height:45px;color:#000;left:417.55px;transform-origin:0 50%;transform:scaleX(1.0240);margin-left:-2px;margin-top:-349.8px;"><span>001.  1.  10.A</span></span>
<span class="t" id="t96" style="top:591.40px;font-size:22.5px;line-height:45px;height:45px;color:#000;font-weight:700;left:599.15px;width:1000px;text-align:right;transform-origin:100% 50%;transform:scaleX(1.0609);margin-left:-2px;margin-top:-349.8px;"><span>200,000</span></span>
<span class="t" id="t97" style="top:591.40px;font-size:22.5px;line-height:45px;height:45px;color:#000;left:1168.90px;width:1000px;text-align:center;transform-origin:50% 50%;transform:scaleX(1.0561);margin-left:-2px;margin-top:-349.8px;"><span>ok</span></span>
<span class="t" id="t98" style="top:623.40px;font-size:22.5px;line-height:45px;height:45px;color:#000;left:46.25px;transform-origin:0 50%;transform:scaleX(1.0291);margin-left:-2px;margin-top:-349.8px;"><span>10.01.2020</span></span>
<span class="t" id="t99" style="top:623.40px;font-size:22.5px;line-height:45px;height:45px;color:#000;left:-186.70px;width:1000px;text-align:center;transform-origin:50% 50%;transform:scaleX(1.0587);margin-left:-2px;margin-top:-349.8px;"><span>0003</span></span>
<span class="t" id="t100" style="top:623.40px;font-size:22.5px;line-height:45px;height:45px;color:#000;left:417.55px;transform-origin:0 50%;transform:scaleX(1.0240);margin-left:-2px;margin-top:-349.8px;"><span>001.  2.  10</span></span>
<span class="t" id="t101" style="top:623.40px;font-size:22.5px;line-height:45px;height:45px;color:#000;font-weight:700;left:599.15px;width:1000px;text-align:right;transform-origin:100% 50%;transform:scaleX(1.0609);margin-left:-2px;margin-top:-349.8px;"><span>400,000</span></span>
<span class="t" id="t102" style="top:623.40px;font-size:22.5px;line-height:45px;height:45px;color:#000;left:1168.90px;width:1000px;text-align:center;transform-origin:50% 50%;transform:scaleX(1.0561);margin-left:-2px;margin-top:-349.8px;"><span>ok</span></span>
<span class="t" id="t103" style="top:655.40px;font-size:22.5px;line-height:45px;height:45px;color:#000;left:46.25px;transform-origin:0 50%;transform:scaleX(1.0291);margin-left:-2px;margin-top:-349.8px;"><span>10.01.2020</span></span>
<span class="t" id="t104" style="top:655.40px;font-size:22.5px;line-height:45px;height:45px;color:#000;left:-186.70px;width:1000px;text-align:center;transform-origin:50% 50%;transform:scaleX(1.0587);margin-left:-2px;margin-top:-349.8px;"><span>0003</span></span>
<span class="t" id="t105" style="top:655.40px;font-size:22.5px;line-height:45px;height:45px;color:#000;left:417.55px;transform-origin:0 50%;transform:scaleX(1.0240);margin-left:-2px;margin-top:-349.8px;"><span>001.  2.  10</span></span>
<span class="t" id="t106" style="top:655.40px;font-size:22.5px;line-height:45px;height:45px;color:#000;font-weight:700;left:599.15px;width:1000px;text-align:right;transform-origin:100% 50%;transform:scaleX(1.0609);margin-left:-2px;margin-top:-349.8px;"><span>6,000</span></span>
<span class="t" id="t107" style="top:655.40px;font-size:22.5px;line-height:45px;height:45px;color:#000;left:1168.90px;width:1000px;text-align:center;transform-origin:50% 50%;transform:scaleX(1.0561);margin-left:-2px;margin-top:-349.8px;"><span>ok</span></span>
</div>
<div class="a" style="left:2059px;top:391px;width:25px;height:754px;background:#f3f3f3"></div>
<div class="a" style="left:2059px;top:366px;width:25px;height:25px;border:1px solid #b5b5b5;background:#fff"></div>
<div class="a" style="left:2059px;top:391px;width:25px;height:26px;border:1px solid #b5b5b5;background:#fff"></div>
<div class="a" style="left:2059px;top:1144px;width:25px;height:25px;border:1px solid #b5b5b5;background:#fff"></div>
<svg style="left:2059px;top:358px" width="26" height="812"><path d="M7 23H18L12.5 17Z" fill="#6d6d6d"/><path d="M7 795.6H18L12.5 801.6Z" fill="#6d6d6d"/></svg>
<div class="a" style="left:2px;top:1168px;width:2085px;height:34px;background:#f3f3f3"></div>
<div class="hl" style="left:2px;top:1168px;width:2055px;background:#ababab"></div>
<svg style="left:0;top:1168px" width="400" height="34"><path d="M30 16.8L36.6 11.2V22.4Z" fill="#c8c8c8"/><path d="M72.4 16.8L65.8 11.2V22.4Z" fill="#c8c8c8"/><circle cx="321.6" cy="17" r="10.2" fill="none" stroke="#767676" stroke-width="1.3"/><path d="M316.2 17H327M321.6 11.6V22.4" stroke="#767676" stroke-width="1.5"/></svg>
<div class="vl" style="left:120px;top:1172px;height:26px;background:#ababab"></div>
<span class="t" id="t108" style="top:1165.22px;font-size:19px;line-height:38px;height:38px;color:#444;left:132.46px;transform-origin:0 50%;transform:scaleX(1.0200);"><span>LV</span></span>
<div class="a" style="left:167px;top:1168px;width:105px;height:30.6px;background:#fff;border-left:1px solid #ababab;border-right:1px solid #ababab;border-bottom:2.4px solid #217346"></div>
<span class="t" id="t109" style="top:1165.22px;font-size:19px;line-height:38px;height:38px;color:#217346;font-weight:700;left:178.26px;transform-origin:0 50%;transform:scaleX(1.0278);"><span>Aufmass</span></span>
<div class="a" style="left:1963px;top:1173px;width:67px;height:24px;background:#e9e9e9"></div>
<div class="a" style="left:1294px;top:1172px;width:669px;height:25px;border:1px solid #ababab;background:#fff"></div>
<div class="a" style="left:2030px;top:1172px;width:25px;height:25px;border:1px solid #c6c6c6;background:#fff"></div>
<svg style="left:2030px;top:1172px" width="25" height="25"><path d="M10 6.2L15.8 12.4L10 18.6Z" fill="#666"/></svg>
<div class="a" style="left:0;top:1202px;width:2089px;height:35px;background:#217346"></div>
<div class="a" style="left:1621px;top:1202px;width:60px;height:35px;background:#115c30"></div>
<span class="t" id="t110" style="top:1203.66px;font-size:15.4px;line-height:30px;height:30px;color:#fff;left:12.48px;transform-origin:0 50%;transform:scaleX(1.0306);"><span>Bereit</span></span>
<span class="t" id="t111" style="top:1203.66px;font-size:15.4px;line-height:30px;height:30px;color:#fff;left:107.68px;transform-origin:0 50%;transform:scaleX(0.9838);"><span>Berechnen</span></span>
<span class="t" id="t112" style="top:1203.66px;font-size:15.4px;line-height:30px;height:30px;color:#fff;left:1445.08px;transform-origin:0 50%;transform:scaleX(1.0227);"><span>Anzeigeeinstellungen</span></span>
<span class="t" id="t113" style="top:1203.66px;font-size:15.4px;line-height:30px;height:30px;color:#fff;left:2015.48px;transform-origin:0 50%;transform:scaleX(1.0185);"><span>102 %</span></span>
<svg style="left:0;top:1202px" width="2089" height="35" fill="none" stroke="#fff" stroke-width="1.5">
<path d="M230 12.5V8.4H209.8V25.4H216.5" /><path d="M209.8 11.6H230" stroke-width="1.2"/>
<path d="M212.6 15.2H217.8M212.6 18.6H216.6M212.6 22H216" stroke-width="1.3"/>
<circle cx="224.2" cy="19.6" r="6.4" stroke-width="1.6"/><circle cx="224.2" cy="19.6" r="3" fill="#fff" stroke="none"/>
<path d="M1420.4 7.8H1441.6V16M1420.4 7.8V21.6H1428" stroke-width="1.4"/><path d="M1424 25H1431" stroke-width="1.4"/>
<circle cx="1437" cy="21.4" r="3.6" stroke-width="1.8"/><path d="M1437 15.4V27.4M1431 21.4H1443M1432.8 17.2L1441.2 25.6M1441.2 17.2L1432.8 25.6" stroke-width="1.3"/><circle cx="1437" cy="21.4" r="1.7" fill="#185c37" stroke="none"/>
<g stroke-width="1.6"><rect x="1641.2" y="6.6" width="18" height="18"/><path d="M1647.2 6.6V24.6M1653.2 6.6V24.6M1641.2 12.6H1659.2M1641.2 18.6H1659.2"/></g>
<g stroke-width="1.5"><rect x="1700.8" y="6.2" width="20.4" height="18.6"/><rect x="1705.4" y="9.8" width="11.2" height="11.6" stroke-width="1.3"/><path d="M1707.6 12.8H1714.4M1707.6 15.6H1714.4M1707.6 18.4H1714.4" stroke-width="1.2"/></g>
<g stroke-width="1.5"><rect x="1760.8" y="6.2" width="20.4" height="18.6"/><path d="M1760.8 17.6H1774.4V6.2M1767.6 6.2V17.6"/></g>
<path d="M1809 15.6H1820" stroke-width="1.2"/><path d="M1829 15.6H1977" stroke-width="2"/><path d="M1985 15.6H1996M1990.5 10.2V21" stroke-width="1.2"/>
<rect x="1900" y="8.2" width="8" height="17" fill="#fff" stroke="none"/>
</svg>
<div class="a" style="left:527px;top:267px;width:761px;height:954px;background:#f0f0f0;border:1px solid #8f8f8f;box-shadow:0 3px 14px rgba(0,0,0,.34)"></div>
<div class="a" style="left:528px;top:268px;width:759px;height:44px;background:#fff"></div>
<span class="t" id="t114" style="top:274.71px;font-size:17px;line-height:34px;height:34px;color:#9a9a9a;left:538.38px;transform-origin:0 50%;transform:scaleX(1.0379);"><span>LV-Liste: Position auswählen und mit OK übernehmen</span></span>
<svg style="left:1250px;top:278px" width="26" height="26"><path d="M5 4.2L20 19M20 4.2L5 19" stroke="#6a6a6a" stroke-width="1.1" fill="none"/></svg>
<div class="a" style="left:540px;top:336px;width:733px;height:823px;background:#fff;border-top:1px solid #a0a0a0;border-left:1px solid #a0a0a0;border-right:1px solid #fff;border-bottom:1px solid #fff"></div>
<div class="a" style="left:541px;top:337px;width:731px;height:821px;background:#fff;border-top:2px solid #696969;border-left:2px solid #696969;border-right:1px solid #e3e3e3;border-bottom:1px solid #e3e3e3"></div>
<div class="a" style="left:543px;top:402px;width:727px;height:21px;background:#0078d7"></div>
<span class="t" id="l_code0" style="top:336.06px;font-size:15.4px;line-height:30px;height:30px;color:#000;font-family:'DejaVu Sans', 'Liberation Sans', sans-serif;left:557.48px;transform-origin:0 50%;transform:scaleX(0.9630);"><span>001.  1.  10</span></span>
<span class="t" id="l_desc0" style="top:336.06px;font-size:15.4px;line-height:30px;height:30px;color:#000;font-family:'DejaVu Sans', 'Liberation Sans', sans-serif;left:676.88px;transform-origin:0 50%;transform:scaleX(0.9527);"><span>Baustelleneinrichtung einrichten, vorhalten, räumen ¶</span></span>
<span class="t" id="l_code1" style="top:357.06px;font-size:15.4px;line-height:30px;height:30px;color:#000;font-family:'DejaVu Sans', 'Liberation Sans', sans-serif;left:557.48px;transform-origin:0 50%;transform:scaleX(0.9577);"><span>001.  1.  10.1</span></span>
<span class="t" id="l_desc1" style="top:357.06px;font-size:15.4px;line-height:30px;height:30px;color:#000;font-family:'DejaVu Sans', 'Liberation Sans', sans-serif;left:676.88px;transform-origin:0 50%;transform:scaleX(0.9645);"><span>Betreiben der Wasserhaltungsanlage¶</span></span>
<span class="t" id="l_code2" style="top:378.06px;font-size:15.4px;line-height:30px;height:30px;color:#000;font-family:'DejaVu Sans', 'Liberation Sans', sans-serif;left:557.48px;transform-origin:0 50%;transform:scaleX(0.9741);"><span>001.  1.  10.A</span></span>
<span class="t" id="l_desc2" style="top:378.06px;font-size:15.4px;line-height:30px;height:30px;color:#000;font-family:'DejaVu Sans', 'Liberation Sans', sans-serif;left:676.88px;transform-origin:0 50%;transform:scaleX(0.9601);"><span>Betreiben der Wasserhaltungsanlage mit Überwachung¶ ¶</span></span>
<span class="t" id="l_code3" style="top:399.06px;font-size:15.4px;line-height:30px;height:30px;color:#fff;font-family:'DejaVu Sans', 'Liberation Sans', sans-serif;left:557.48px;transform-origin:0 50%;transform:scaleX(0.9630);"><span>001.  2.  10</span></span>
<span class="t" id="l_desc3" style="top:399.06px;font-size:15.4px;line-height:30px;height:30px;color:#fff;font-family:'DejaVu Sans', 'Liberation Sans', sans-serif;left:676.88px;transform-origin:0 50%;transform:scaleX(0.9593);"><span>Boden für Baugrube, BK 3¶</span></span>
<span class="t" id="l_code4" style="top:420.06px;font-size:15.4px;line-height:30px;height:30px;color:#000;font-family:'DejaVu Sans', 'Liberation Sans', sans-serif;left:557.48px;transform-origin:0 50%;transform:scaleX(0.9630);"><span>001.  2.  20</span></span>
<span class="t" id="l_desc4" style="top:420.06px;font-size:15.4px;line-height:30px;height:30px;color:#000;font-family:'DejaVu Sans', 'Liberation Sans', sans-serif;left:676.88px;transform-origin:0 50%;transform:scaleX(0.9598);"><span>Boden Graben Kanal Tiefe bis 1,45 m lösen, lagern Bodenklasse 3 ¶</span></span>
<span class="t" id="l_code5" style="top:441.06px;font-size:15.4px;line-height:30px;height:30px;color:#000;font-family:'DejaVu Sans', 'Liberation Sans', sans-serif;left:557.48px;transform-origin:0 50%;transform:scaleX(0.9630);"><span>001.  2.  30</span></span>
<span class="t" id="l_desc5" style="top:441.06px;font-size:15.4px;line-height:30px;height:30px;color:#000;font-family:'DejaVu Sans', 'Liberation Sans', sans-serif;left:676.88px;transform-origin:0 50%;transform:scaleX(0.9507);"><span>Oberboden abtragen, lagern d= 30 cm Bodengruppe 4 ¶</span></span>
<span class="t" id="l_code6" style="top:462.06px;font-size:15.4px;line-height:30px;height:30px;color:#000;font-family:'DejaVu Sans', 'Liberation Sans', sans-serif;left:557.48px;transform-origin:0 50%;transform:scaleX(0.9630);"><span>001.  2.  40</span></span>
<span class="t" id="l_desc6" style="top:462.06px;font-size:15.4px;line-height:30px;height:30px;color:#000;font-family:'DejaVu Sans', 'Liberation Sans', sans-serif;left:676.88px;transform-origin:0 50%;transform:scaleX(0.9646);"><span>Betonpflaster L/B 100/100 mm H 80 mm  grau¶</span></span>
<span class="t" id="l_code7" style="top:483.06px;font-size:15.4px;line-height:30px;height:30px;color:#000;font-family:'DejaVu Sans', 'Liberation Sans', sans-serif;left:557.48px;transform-origin:0 50%;transform:scaleX(0.9630);"><span>001.  2.  50</span></span>
<span class="t" id="l_desc7" style="top:483.06px;font-size:15.4px;line-height:30px;height:30px;color:#000;font-family:'DejaVu Sans', 'Liberation Sans', sans-serif;left:676.88px;transform-origin:0 50%;transform:scaleX(0.9647);"><span>Betonpflaster L/B 100/100 mm H 80 mm  in BVBS-blau¶</span></span>
<span class="t" id="l_code8" style="top:504.06px;font-size:15.4px;line-height:30px;height:30px;color:#000;font-family:'DejaVu Sans', 'Liberation Sans', sans-serif;left:557.48px;transform-origin:0 50%;transform:scaleX(0.9630);"><span>001.  3.  10</span></span>
<span class="t" id="l_desc8" style="top:504.06px;font-size:15.4px;line-height:30px;height:30px;color:#000;font-family:'DejaVu Sans', 'Liberation Sans', sans-serif;left:676.88px;transform-origin:0 50%;transform:scaleX(0.9735);"><span>Kalksandstein-Innenwand KS-R SFK 20 RDK 1,8 D 11,5cm ¶</span></span>
<span class="t" id="l_code9" style="top:525.06px;font-size:15.4px;line-height:30px;height:30px;color:#000;font-family:'DejaVu Sans', 'Liberation Sans', sans-serif;left:557.48px;transform-origin:0 50%;transform:scaleX(0.9630);"><span>001.  3.  20</span></span>
<span class="t" id="l_desc9" style="top:525.06px;font-size:15.4px;line-height:30px;height:30px;color:#000;font-family:'DejaVu Sans', 'Liberation Sans', sans-serif;left:676.88px;transform-origin:0 50%;transform:scaleX(0.9735);"><span>Kalksandstein-Innenwand KS-R SFK 20 RDK 1,8 D 17,5cm ¶</span></span>
<span class="t" id="l_code10" style="top:546.06px;font-size:15.4px;line-height:30px;height:30px;color:#000;font-family:'DejaVu Sans', 'Liberation Sans', sans-serif;left:557.48px;transform-origin:0 50%;transform:scaleX(0.9630);"><span>001.  3.  30</span></span>
<span class="t" id="l_desc10" style="top:546.06px;font-size:15.4px;line-height:30px;height:30px;color:#000;font-family:'DejaVu Sans', 'Liberation Sans', sans-serif;left:676.88px;transform-origin:0 50%;transform:scaleX(0.9720);"><span>Außenwand Porenbeton-Planelement SFK 4 D 36,5cm 0,15W/(mK) ¶</span></span>
<span class="t" id="l_code11" style="top:567.06px;font-size:15.4px;line-height:30px;height:30px;color:#000;font-family:'DejaVu Sans', 'Liberation Sans', sans-serif;left:557.48px;transform-origin:0 50%;transform:scaleX(0.9630);"><span>001.  3.  40</span></span>
<span class="t" id="l_desc11" style="top:567.06px;font-size:15.4px;line-height:30px;height:30px;color:#000;font-family:'DejaVu Sans', 'Liberation Sans', sans-serif;left:676.88px;transform-origin:0 50%;transform:scaleX(0.9714);"><span>Außenwand VHLz SFK 28 RDK 1,6 D 36,5cm¶</span></span>
<span class="t" id="l_code12" style="top:588.06px;font-size:15.4px;line-height:30px;height:30px;color:#000;font-family:'DejaVu Sans', 'Liberation Sans', sans-serif;left:557.48px;transform-origin:0 50%;transform:scaleX(0.9630);"><span>001.  4.  10</span></span>
<span class="t" id="l_desc12" style="top:588.06px;font-size:15.4px;line-height:30px;height:30px;color:#000;font-family:'DejaVu Sans', 'Liberation Sans', sans-serif;left:676.88px;transform-origin:0 50%;transform:scaleX(0.9567);"><span>Schalung Deckenplatte GF-Schalungsplatten H 2-3m ¶</span></span>
<span class="t" id="l_code13" style="top:609.06px;font-size:15.4px;line-height:30px;height:30px;color:#000;font-family:'DejaVu Sans', 'Liberation Sans', sans-serif;left:557.48px;transform-origin:0 50%;transform:scaleX(0.9630);"><span>001.  4.  20</span></span>
<span class="t" id="l_desc13" style="top:609.06px;font-size:15.4px;line-height:30px;height:30px;color:#000;font-family:'DejaVu Sans', 'Liberation Sans', sans-serif;left:676.88px;transform-origin:0 50%;transform:scaleX(0.9631);"><span>Ortbeton Deckenplatte Stahlbeton C20/25 D 20cm ¶</span></span>
<span class="t" id="l_code14" style="top:630.06px;font-size:15.4px;line-height:30px;height:30px;color:#000;font-family:'DejaVu Sans', 'Liberation Sans', sans-serif;left:557.48px;transform-origin:0 50%;transform:scaleX(0.9630);"><span>001.  4.  30</span></span>
<span class="t" id="l_desc14" style="top:630.06px;font-size:15.4px;line-height:30px;height:30px;color:#000;font-family:'DejaVu Sans', 'Liberation Sans', sans-serif;left:676.88px;transform-origin:0 50%;transform:scaleX(0.9652);"><span>Ortbeton Außenwand D 24cm Stahlbeton C35/45 ¶</span></span>
<span class="t" id="l_code15" style="top:651.06px;font-size:15.4px;line-height:30px;height:30px;color:#000;font-family:'DejaVu Sans', 'Liberation Sans', sans-serif;left:557.48px;transform-origin:0 50%;transform:scaleX(0.9630);"><span>002.  1.  10</span></span>
<span class="t" id="l_desc15" style="top:651.06px;font-size:15.4px;line-height:30px;height:30px;color:#000;font-family:'DejaVu Sans', 'Liberation Sans', sans-serif;left:676.88px;transform-origin:0 50%;transform:scaleX(0.9698);"><span>Kabel 0.6/1 kV einziehen NYY 3x1.5¶</span></span>
<span class="t" id="l_code16" style="top:672.06px;font-size:15.4px;line-height:30px;height:30px;color:#000;font-family:'DejaVu Sans', 'Liberation Sans', sans-serif;left:557.48px;transform-origin:0 50%;transform:scaleX(0.9630);"><span>002.  1.  20</span></span>
<span class="t" id="l_desc16" style="top:672.06px;font-size:15.4px;line-height:30px;height:30px;color:#000;font-family:'DejaVu Sans', 'Liberation Sans', sans-serif;left:676.88px;transform-origin:0 50%;transform:scaleX(0.9698);"><span>Kabel 0.6/1 kV einziehen NYY 4x1.5¶</span></span>
<span class="t" id="l_code17" style="top:693.06px;font-size:15.4px;line-height:30px;height:30px;color:#000;font-family:'DejaVu Sans', 'Liberation Sans', sans-serif;left:557.48px;transform-origin:0 50%;transform:scaleX(0.9371);"><span>999.999.9999</span></span>
<span class="t" id="l_desc17" style="top:693.06px;font-size:15.4px;line-height:30px;height:30px;color:#000;font-family:'DejaVu Sans', 'Liberation Sans', sans-serif;left:676.88px;transform-origin:0 50%;transform:scaleX(0.9700);"><span>Ingenieurstunde¶</span></span>
<span class="t" id="l_code18" style="top:714.06px;font-size:15.4px;line-height:30px;height:30px;color:#000;font-family:'DejaVu Sans', 'Liberation Sans', sans-serif;left:557.48px;transform-origin:0 50%;transform:scaleX(0.9408);"><span>999.999.9999.</span></span>
<span class="t" id="l_desc18" style="top:714.06px;font-size:15.4px;line-height:30px;height:30px;color:#000;font-family:'DejaVu Sans', 'Liberation Sans', sans-serif;left:676.88px;transform-origin:0 50%;transform:scaleX(0.9661);"><span>Meisterstunden¶</span></span>
<span class="t" id="l_code19" style="top:735.06px;font-size:15.4px;line-height:30px;height:30px;color:#000;font-family:'DejaVu Sans', 'Liberation Sans', sans-serif;left:557.48px;transform-origin:0 50%;transform:scaleX(0.9408);"><span>999.999.9999.</span></span>
<span class="t" id="l_desc19" style="top:735.06px;font-size:15.4px;line-height:30px;height:30px;color:#000;font-family:'DejaVu Sans', 'Liberation Sans', sans-serif;left:676.88px;transform-origin:0 50%;transform:scaleX(0.9567);"><span>Helferstunden¶</span></span>
<div class="a" style="left:720px;top:1175px;width:180px;height:35.5px;background:#f0f0f0;border-top:2px solid #fff;border-left:2px solid #fff;border-right:2px solid #696969;border-bottom:2px solid #696969;box-shadow:inset -1px -1px 0 #a0a0a0"></div>
<div class="a" style="left:912px;top:1175px;width:180px;height:36px;border:1px solid #000"></div>
<div class="a" style="left:913px;top:1176px;width:178px;height:34px;background:#f0f0f0;border-top:2px solid #fff;border-left:2px solid #fff;border-right:2px solid #696969;border-bottom:2px solid #696969;box-shadow:inset -1px -1px 0 #a0a0a0"></div>
<span class="t" id="t155" style="top:1176.78px;font-size:16.5px;line-height:33px;height:33px;color:#000;font-family:'DejaVu Sans', 'Liberation Sans', sans-serif;left:309.05px;width:1000px;text-align:center;transform-origin:50% 50%;transform:scaleX(0.9944);"><span>OK</span></span>
<span class="t" id="t156" style="top:1176.78px;font-size:16.5px;line-height:33px;height:33px;color:#000;font-family:'DejaVu Sans', 'Liberation Sans', sans-serif;left:501.40px;width:1000px;text-align:center;transform-origin:50% 50%;transform:scaleX(0.8991);"><span>Abbrechen</span></span>
<div class="a" style="left:0;top:0;width:2089px;height:2px;background:#217346"></div>
<div class="a" style="left:0;top:0;width:2px;height:1237px;background:#217346"></div>
<div class="a" style="left:2087px;top:0;width:2px;height:1237px;background:#217346"></div>
</body></html>
